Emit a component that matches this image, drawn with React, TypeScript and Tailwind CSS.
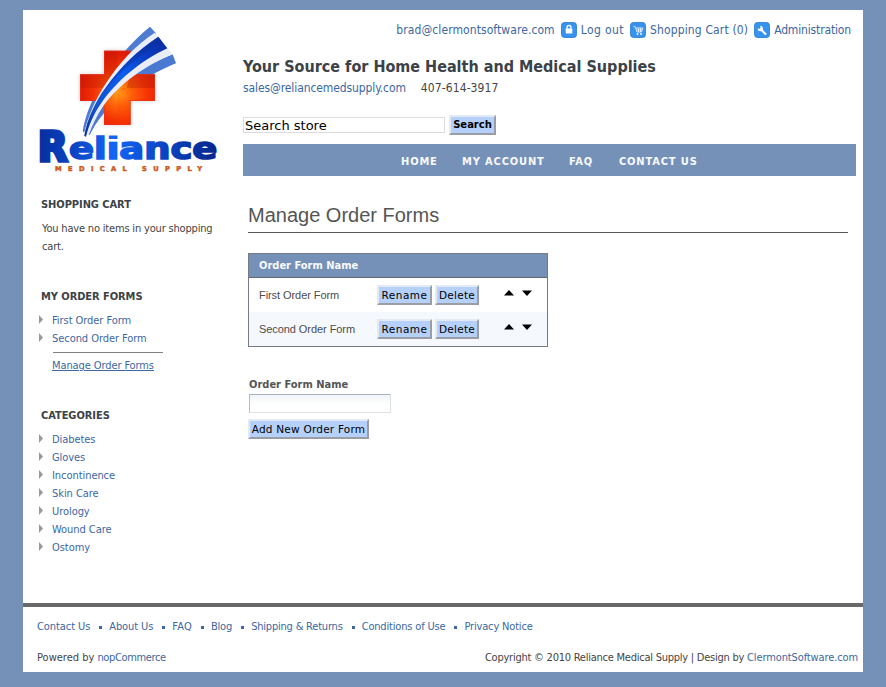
import React from "react";

const tahoma = "font-['DejaVu_Sans_Condensed','DejaVu_Sans',sans-serif]";
const link = "text-[#3c679f]";

function Logo() {
  return (
    <svg className="ml-[7px] mt-[10px] block h-[160px] w-[200px]" viewBox="0 0 600 480">
      <defs>
        <radialGradient id="cross" gradientUnits="userSpaceOnUse" cx="272" cy="222" r="135">
          <stop offset="0" stopColor="#ffb01c" />
          <stop offset="0.25" stopColor="#ff6a0c" />
          <stop offset="0.6" stopColor="#f33204" />
          <stop offset="1" stopColor="#d91405" />
        </radialGradient>
        <linearGradient id="swoosh" x1="1" y1="0" x2="0" y2="1">
          <stop offset="0" stopColor="#0a2c9c" />
          <stop offset="0.22" stopColor="#0c3cc0" />
          <stop offset="0.45" stopColor="#0b5cf0" />
          <stop offset="0.8" stopColor="#1553cc" />
          <stop offset="1" stopColor="#0c2f8c" />
        </linearGradient>
        <linearGradient id="word" gradientUnits="userSpaceOnUse" x1="25" y1="0" x2="560" y2="0">
          <stop offset="0" stopColor="#062e9e" />
          <stop offset="0.2" stopColor="#0c45c4" />
          <stop offset="0.42" stopColor="#1266f6" />
          <stop offset="0.7" stopColor="#0b45c4" />
          <stop offset="1" stopColor="#06268c" />
        </linearGradient>
        <filter id="shade" x="-20%" y="-20%" width="140%" height="140%">
          <feGaussianBlur stdDeviation="7" />
        </filter>
      </defs>
      <path d="M222 92H302V163H375V243H302V315H222V243H150V163H222Z" fill="#9a8a86" opacity="0.45" filter="url(#shade)" />
      <path d="M360 20L378 40C320 82 262 142 225 205C196 252 176 300 163 338L158 334C164 292 184 240 216 190C252 128 302 66 360 20Z" fill="#4d7cd0" />
      <path d="M428 103L438 130C352 166 270 220 218 284C200 306 188 326 179 346L174 342C198 250 300 150 428 103Z" fill="#4a79d2" />
      <path d="M222 92H302V163H375V243H302V315H222V243H150V163H222Z" fill="url(#cross)" />
      <path d="M222 92H262V204H150V163H222Z" fill="#b81c04" opacity="0.32" />
      <path d="M302 163H375V204H290Z" fill="#b81c04" opacity="0.4" />
      <path d="M262 222V315H302V243H375V204H275Z" fill="#ff3a00" opacity="0.25" />
      <path d="M223.500 93.500H300.500V164.500H373.500V241.500H300.500V313.500H223.500V241.500H151.500V164.500H223.500Z" fill="none" stroke="#ee3020" strokeWidth="3" opacity="0.6" />
      <path d="M374 38L428 103C350 134 270 190 220 258C200 286 186 318 176 346L162 342C174 288 196 238 228 190C266 130 316 76 374 38Z" fill="#e9edf8" />
      <path d="M385 50L412 85C332 122 258 184 212 252C190 284 176 318 168 350L163 348C172 296 196 246 228 202C270 142 324 90 385 50Z" fill="url(#swoosh)" />
      <path d="M385 50L397 66C310 114 236 186 200 248C184 276 172 312 166 348L163 348C172 296 196 246 228 202C270 142 324 90 385 50Z" fill="#0a2f9f" opacity="0.45" />
      <g fontFamily="DejaVu Sans, sans-serif" fontWeight="700" fill="url(#word)" stroke="url(#word)">
        <text x="23" y="423" fontSize="120" strokeWidth="10" textLength="90" lengthAdjust="spacingAndGlyphs">
          R
        </text>
        <text x="117" y="417" fontSize="93" strokeWidth="5" textLength="445" lengthAdjust="spacingAndGlyphs">
          eliance
        </text>
      </g>
      <rect x="231" y="357" width="36" height="8" fill="#fff" />
      <rect x="231" y="340" width="36" height="6" fill="#fff" />
      <text x="75" y="453" fontSize="20" textLength="441" fontFamily="DejaVu Sans, sans-serif" fontWeight="700" fill="#cc5a20" stroke="#cc5a20" strokeWidth="1.500">
        MEDICAL SUPPLY
      </text>
    </svg>
  );
}

function SideItem({ children }: { children: React.ReactNode }) {
  return (
    <li className="flex h-[18px] items-center">
      <svg className="mb-[4px] mr-[9px] h-[9px] w-[4px]" viewBox="0 0 4 9">
        <path d="M0 0L4 4.500L0 9Z" fill="#999" />
      </svg>
      <a className={`tracking-[-0.06px] ${link}`}>{children}</a>
    </li>
  );
}

function SideTitle({ children }: { children: React.ReactNode }) {
  return <h3 className="ml-[2px] h-[18px] text-[11px] font-bold leading-[18px] tracking-[-0.06px] text-[#3b4248]">{children}</h3>;
}

function Badge({ children }: { children: React.ReactNode }) {
  return (
    <svg className="ml-[6px] mr-[4px] h-[16px] w-[16px]" viewBox="0 0 16 16">
      <rect x="0.500" y="0.500" width="15" height="15" rx="3" fill="#3793ee" stroke="#2478cf" strokeWidth="0.800" />
      {children}
    </svg>
  );
}

function Button({ children, className }: { children: React.ReactNode; className: string }) {
  return (
    <button
      className={`flex items-center justify-center whitespace-nowrap border-2 border-b-[#9a9da4] border-l-[#e4eaf4] border-r-[#9a9da4] border-t-[#e4eaf4] bg-[#b5d0fa] font-['DejaVu_Sans',sans-serif] leading-none text-black ${className}`}
    >
      {children}
    </button>
  );
}

function Row({ name, className }: { name: string; className: string }) {
  return (
    <div className={`flex h-[34px] items-center pl-[10px] ${className}`}>
      <span className="w-[118px] font-['Liberation_Sans',sans-serif] text-[11px] tracking-[-0.07px] text-[#4c4c4c]">{name}</span>
      <Button className="h-[20px] w-[55px] pt-px text-[10.5px] tracking-[0.5px]">Rename</Button>
      <Button className="ml-[3px] h-[20px] w-[44px] pt-px text-[10.5px] tracking-[0.25px]">Delete</Button>
      <svg className="mb-[4px] ml-[25px] h-[6px] w-[28px]" viewBox="0 0 28 6">
        <path d="M0 5.500L5 0L10 5.500ZM18 0.500H28L23 6Z" fill="#000" />
      </svg>
    </div>
  );
}

const footerLinks = [
  { text: "Contact Us", spacing: "tracking-[-0.08px]" },
  { text: "About Us", spacing: "tracking-[-0.1px]" },
  { text: "FAQ", spacing: "tracking-[0.2px]" },
  { text: "Blog", spacing: "tracking-[-0.17px]" },
  { text: "Shipping & Returns", spacing: "tracking-[-0.2px]" },
  { text: "Conditions of Use", spacing: "tracking-[-0.17px]" },
  { text: "Privacy Notice", spacing: "tracking-[-0.17px]" },
];
const categories = ["Diabetes", "Gloves", "Incontinence", "Skin Care", "Urology", "Wound Care", "Ostomy"];

export default function App() {
  return (
    <div className={`h-[687px] w-[886px] overflow-hidden bg-[#7691b8] pl-[23px] pt-[10px] text-[11px] leading-[18px] text-[#444] ${tahoma}`}>
      <div className="flex h-[662px] w-[840px] flex-col bg-white">
        <div className="flex h-[593px]">
          <aside className="w-[220px] shrink-0">
            <Logo />
            <div className="ml-[16px] mt-[16px]">
              <SideTitle>SHOPPING CART</SideTitle>
              <p className="ml-[3px] mt-[6px] w-[185px] tracking-[-0.18px]">
                You have no items in your shopping
                <br />
                cart.
              </p>
              <div className="mt-[32px]">
                <SideTitle>MY ORDER FORMS</SideTitle>
              </div>
              <ul className="mt-[6px]">
                <SideItem>First Order Form</SideItem>
                <SideItem>Second Order Form</SideItem>
              </ul>
              <div className="ml-[14px] mt-[4px] h-px w-[110px] bg-[#808080]" />
              <a className={`ml-[13px] mt-[4px] block tracking-[-0.1px] underline ${link}`}>Manage Order Forms</a>
              <div className="mt-[32px]">
                <SideTitle>CATEGORIES</SideTitle>
              </div>
              <ul className="mt-[6px]">
                {categories.map((c) => (
                  <SideItem key={c}>{c}</SideItem>
                ))}
              </ul>
            </div>
          </aside>
          <main className="w-[613px]">
            <div className={`mt-[11px] flex h-[18px] items-center justify-end pr-[5px] text-[12px] ${link}`}>
              <a className="tracking-[0.08px]">brad@clermontsoftware.com</a>
              <Badge>
                <path d="M6 7V5.500a2 2 0 0 1 4 0V7" fill="none" stroke="#fff" strokeWidth="1.300" />
                <rect x="4.700" y="6.500" width="6.600" height="5" rx="0.800" fill="#fff" />
              </Badge>
              <a className="tracking-[0.4px]">Log out</a>
              <Badge>
                <path d="M3.500 4.500H5L7 10H11.500L12.800 6H5.700M6.500 8H12M8.500 6V10M10.500 6V10" fill="none" stroke="#e4f1ff" strokeWidth="0.900" />
                <circle cx="7.500" cy="12" r="0.900" fill="#fff" />
                <circle cx="11" cy="12" r="0.900" fill="#fff" />
              </Badge>
              <a className="tracking-[0.15px]">Shopping Cart (0)</a>
              <Badge>
                <path d="M7 7.500L11.500 12" stroke="#fff" strokeWidth="2" strokeLinecap="round" />
                <path d="M6 4A2.600 2.600 0 1 1 3.800 6.300L5.500 7L6.700 5.800Z" fill="#fff" />
              </Badge>
              <a className="tracking-[-0.15px]">Administration</a>
            </div>
            <h2 className="mt-[18px] h-[20px] whitespace-nowrap text-[16px] font-bold leading-[20px] text-[#3b4248]">
              Your Source for Home Health and Medical Supplies
            </h2>
            <div className="mt-[2px] flex text-[12px]">
              <a className={`tracking-[-0.1px] ${link}`}>sales@reliancemedsupply.com</a>
              <span className="ml-[15px] tracking-[0.1px]">407-614-3917</span>
            </div>
            <div className="mt-[18px] flex h-[20px] items-center">
              <div className="flex h-[16px] w-[202px] items-center border border-[#dcdcdc] pl-px pt-px font-['DejaVu_Sans',sans-serif] text-[13px] text-black">
                Search store
              </div>
              <Button className="ml-[4px] h-[20px] w-[47px] text-[10px] font-bold">Search</Button>
            </div>
            <nav className="mt-[9px] flex h-[32px] items-center bg-[#7691b8] pl-[158px] pt-[3px] text-[11px] font-bold tracking-[0.85px] text-[#f8faff]">
              <a className="w-[61px]">HOME</a>
              <a className="w-[107px]">MY ACCOUNT</a>
              <a className="w-[50px]">FAQ</a>
              <a>CONTACT US</a>
            </nav>
            <div className="ml-[5px] w-[600px]">
              <h1 className="mt-[27px] h-[30px] border-b border-[#555] font-['Liberation_Sans',sans-serif] text-[20px] leading-[24px] text-[#555]">
                Manage Order Forms
              </h1>
              <div className="mt-[20px] w-[300px] border border-[#767b83]">
                <div className="flex h-[24px] items-center border-b border-[#61676f] bg-[#7691b8] pl-[10px] font-bold text-[#f8faff]">
                  Order Form Name
                </div>
                <Row name="First Order Form" className="bg-white" />
                <Row name="Second Order Form" className="bg-[#f5f9fe]" />
              </div>
              <div className="ml-px mt-[29px] font-bold text-[#555]">Order Form Name</div>
              <div className="ml-px h-[19px] w-[142px] border border-b-[#dce2e4] border-l-[#b4bec2] border-r-[#dce2e4] border-t-[#a8b3b8] bg-linear-to-b from-[#f1f5f7] to-white to-60%" />
              <Button className="mt-[6px] h-[20px] w-[121px] pt-px text-[10.5px] tracking-[0.22px]">Add New Order Form</Button>
            </div>
          </main>
        </div>
        <footer className="border-t-4 border-[#696969] pl-[14px] pr-[5px]">
          <div className={`mt-[11px] flex ${link}`}>
            {footerLinks.map((l, i) => (
              <React.Fragment key={l.text}>
                {i > 0 && <span className="ml-[9px] mr-[7px] mt-[8px] size-[3px] bg-[#3c679f]" />}
                <a className={l.spacing}>{l.text}</a>
              </React.Fragment>
            ))}
          </div>
          <div className="mt-[13px] flex justify-between">
            <span>
              Powered by <a className={`tracking-[-0.36px] ${link}`}>nopCommerce</a>
            </span>
            <span className="tracking-[-0.24px]">
              Copyright © 2010 Reliance Medical Supply | Design by <a className={`tracking-[-0.12px] ${link}`}>ClermontSoftware.com</a>
            </span>
          </div>
        </footer>
      </div>
    </div>
  );
}
